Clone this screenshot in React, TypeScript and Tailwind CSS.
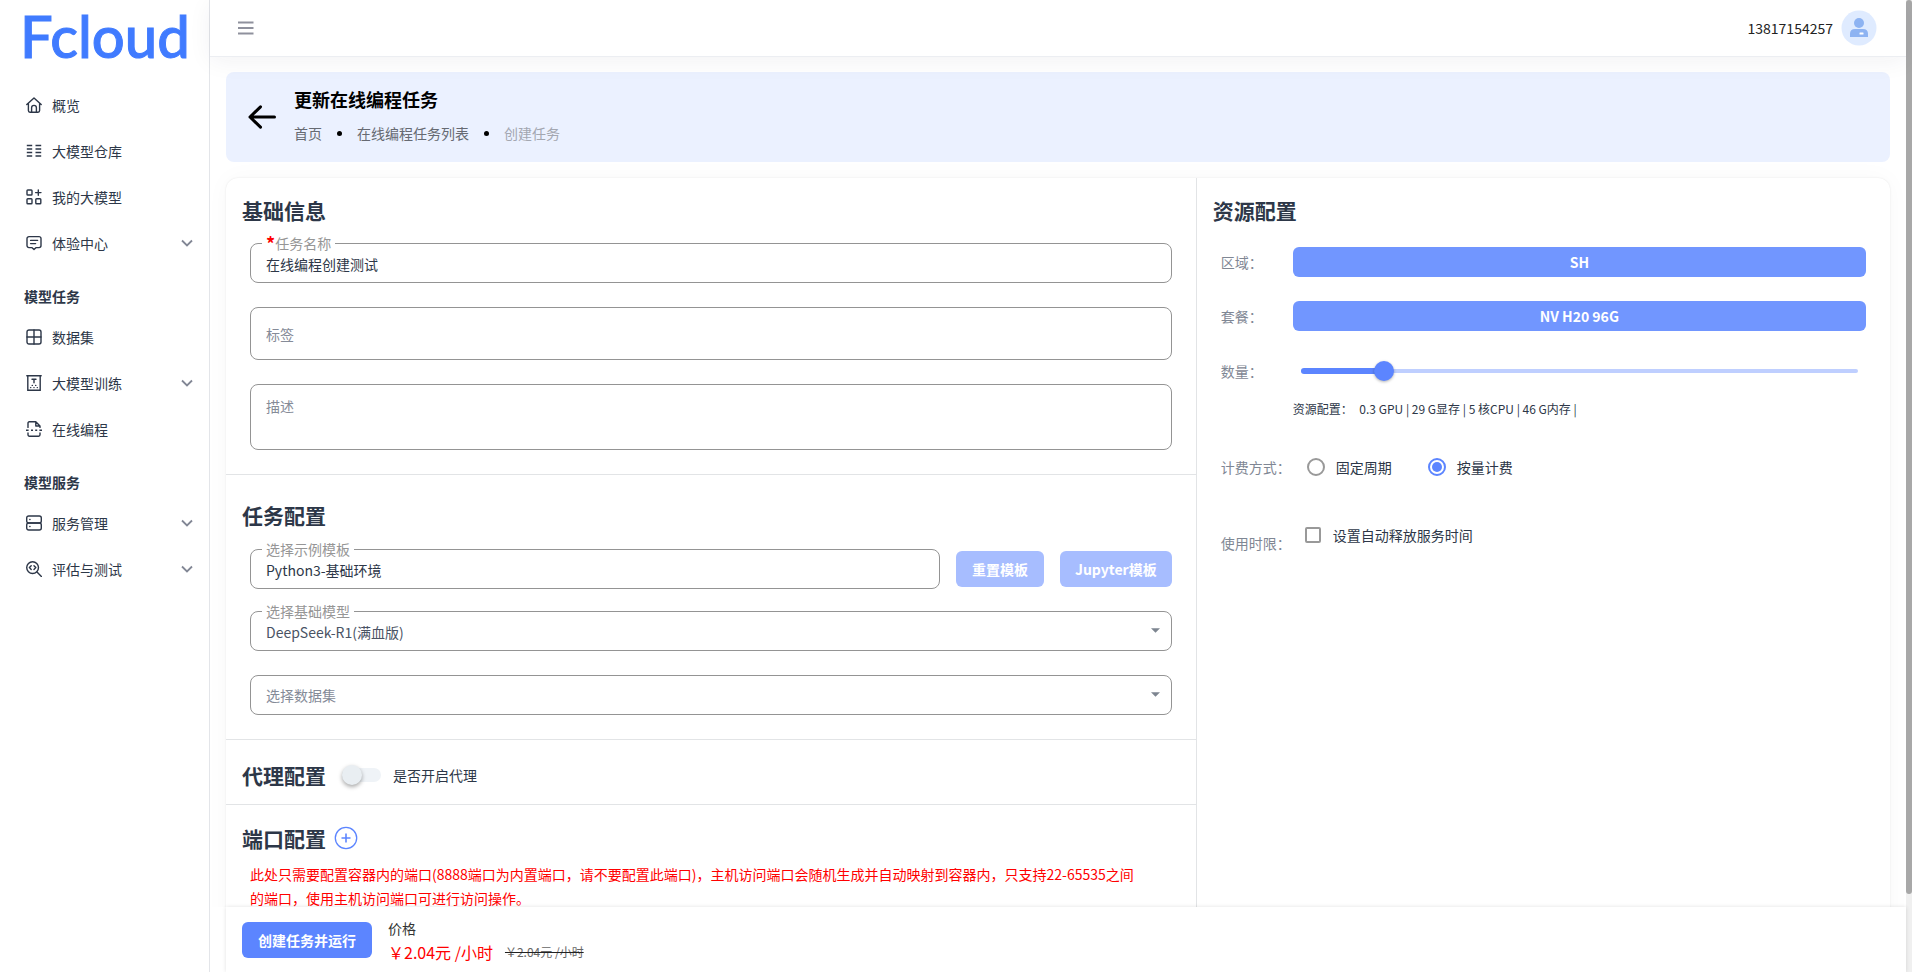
import React, { useState } from 'react';

interface IconProps {
  className?: string;
}

const Icon: React.FC<IconProps & { children: React.ReactNode }> = ({ className = 'w-4 h-4', children }) => (
  <svg viewBox="0 0 16 16" fill="none" stroke="currentColor" strokeWidth="1.4" strokeLinecap="round" strokeLinejoin="round" className={className} aria-hidden="true">
    {children}
  </svg>
);

const HomeIcon = () => (
  <Icon>
    <path d="M.8 7.6 8 .9l7.2 6.7M2.4 6.4v7.2a1.6 1.6 0 0 0 1.6 1.6h8a1.6 1.6 0 0 0 1.6-1.6V6.400" />
    <path d="M5.600 15v-4.200a2.400 2.400 0 0 1 4.800 0V15" />
  </Icon>
);

const ListIcon = () => (
  <Icon>
    <path d="M.8 2.5h5.400M.8 6h5.400M.8 9.500h5.400M.8 13h5.400M9.500 2.500h5.700M9.500 6h5.700M9.500 9.500h5.700M9.500 13h5.700" strokeLinecap="butt" />
  </Icon>
);

const AppsIcon = () => (
  <Icon>
    <rect x="1" y="1" width="5" height="5" rx=".8" />
    <rect x="1" y="9.800" width="5" height="5" rx=".8" />
    <rect x="9.800" y="9.800" width="5" height="5" rx=".8" />
    <path d="M12.300 1v5.200M9.600 3.600H15" />
  </Icon>
);

const ChatIcon = () => (
  <Icon>
    <path d="M3 1.600h10a2 2 0 0 1 2 2v7a2 2 0 0 1-2 2h-2.800L8 14.600l-2.200-2H3a2 2 0 0 1-2-2v-7a2 2 0 0 1 2-2Z" />
    <path d="M4.600 5.400h7M4.600 8.600h5" />
  </Icon>
);

const GridIcon = () => (
  <Icon>
    <rect x="1" y="1" width="14" height="14" rx="2" />
    <path d="M8 1v14M1 8h14" />
  </Icon>
);

const TrainIcon = () => (
  <Icon>
    <path d="M.8 .8h14.400M1.800 .8v14.400h12.400V.8M6 4.200h4M8 4.200v3.600" strokeLinejoin="miter" />
    <path d="M4.600 12.600h.2M7.900 12.600h.2M11.200 12.600h.2M6.200 10.400h.2M9.600 10.400h.2" />
  </Icon>
);

const CodeFileIcon = () => (
  <Icon>
    <path d="M2 6.400V2a1.200 1.200 0 0 1 1.200-1.200h6.600L14 5v1.400M9.800.8V5H14M2 12v1.800a1.400 1.400 0 0 0 1.400 1.400h9.200a1.400 1.400 0 0 0 1.400-1.400V12" />
    <path d="M0 9.200h2.600M5 9.200h2M9.200 9.200h2M13.400 9.200H16" strokeLinecap="butt" />
  </Icon>
);

const ServerIcon = () => (
  <Icon>
    <rect x=".7" y="1" width="14.600" height="7" rx="2" />
    <rect x=".7" y="8" width="14.600" height="7" rx="2" />
    <path d="M3.800 4.500h.2M3.800 11.500h.2" />
  </Icon>
);

const EvaluateIcon = () => (
  <Icon>
    <circle cx="6.600" cy="6.600" r="5.900" />
    <path d="m11 11 4.400 4.400M5.200 4.800 3.400 6.600l1.800 1.800M8 4.800l1.800 1.800L8 8.400" />
  </Icon>
);

const ChevronDown = () => (
  <svg viewBox="0 0 12 8" fill="none" stroke="currentColor" strokeWidth="1.800" className="w-3 h-2 text-[#828795]" aria-hidden="true">
    <path d="m1 1.500 5 5 5-5" />
  </svg>
);

const UserIcon = () => (
  <svg viewBox="0 0 36 36" className="w-9 h-9" aria-hidden="true">
    <circle cx="18" cy="18" r="17.500" fill="#dfebff" />
    <circle cx="18" cy="13" r="5" fill="#8db3f2" />
    <path d="M9 24q0-5 5-5h8q5 0 5 5v3H9z" fill="#8db3f2" />
    <rect x="18.500" y="22.500" width="4" height="2" rx=".5" fill="#fff" />
  </svg>
);

interface MenuItem {
  label: string;
  icon: React.ReactNode;
  expandable?: boolean;
}

const menuGroups: { title?: string; items: MenuItem[] }[] = [
  {
    items: [
      { label: '概览', icon: <HomeIcon /> },
      { label: '大模型仓库', icon: <ListIcon /> },
      { label: '我的大模型', icon: <AppsIcon /> },
      { label: '体验中心', icon: <ChatIcon />, expandable: true },
    ],
  },
  {
    title: '模型任务',
    items: [
      { label: '数据集', icon: <GridIcon /> },
      { label: '大模型训练', icon: <TrainIcon />, expandable: true },
      { label: '在线编程', icon: <CodeFileIcon /> },
    ],
  },
  {
    title: '模型服务',
    items: [
      { label: '服务管理', icon: <ServerIcon />, expandable: true },
      { label: '评估与测试', icon: <EvaluateIcon />, expandable: true },
    ],
  },
];

const Sidebar = () => (
  <aside className="w-[210px] shrink-0 border-r border-[#e3e5e9] bg-white">
    <a href="#" className="flex h-[82px] items-start pl-5 pt-1.5 font-['Lato',sans-serif] text-[58px] leading-[60px] font-medium text-[#407bff] [-webkit-text-stroke:1px_#407bff]">
      Fcloud
    </a>
    <nav>
      {menuGroups.map((group, i) => (
        <div key={i}>
          {group.title && <h3 className="h-12 px-6 pt-5 text-sm font-bold">{group.title}</h3>}
          <ul>
            {group.items.map((item) => (
              <li key={item.label}>
                <a href="#" className="flex h-[46px] items-center gap-2.5 pl-[26px] pr-4 text-sm">
                  {item.icon}
                  <span className="flex-1">{item.label}</span>
                  {item.expandable && <ChevronDown />}
                </a>
              </li>
            ))}
          </ul>
        </div>
      ))}
    </nav>
  </aside>
);

const Header = () => (
  <header className="relative z-10 flex h-[57px] shrink-0 items-center justify-between border-b border-[#eceef2] bg-white pl-7 pr-[29px] shadow-[0_4px_24px_rgba(30,40,70,0.06)]">
    <button aria-label="菜单" className="text-[#8f919d]">
      <svg viewBox="0 0 16 14" stroke="currentColor" strokeWidth="2" className="w-4 h-3.5">
        <path d="M0 1.500h15.500M0 7h15.500M0 12.500h15.500" />
      </svg>
    </button>
    <div className="flex items-center gap-2 text-sm text-[#222]">
      <span>13817154257</span>
      <UserIcon />
    </div>
  </header>
);

const Banner = () => (
  <div className="flex h-[90px] items-center gap-[18px] rounded-lg bg-[#ebf1ff] pl-[22px] text-black">
    <button aria-label="返回">
      <svg viewBox="0 0 28 24" fill="none" stroke="currentColor" strokeWidth="3" strokeLinecap="round" strokeLinejoin="round" className="w-7 h-6">
        <path d="M2 12h24.500M12.500 1.800 2 12l10.500 10.200" />
      </svg>
    </button>
    <div>
      <h1 className="text-lg font-bold leading-8">更新在线编程任务</h1>
      <nav className="flex items-center gap-[15px] text-sm leading-9 text-[#666a72]">
        <a href="#">首页</a>
        <span className="h-[5px] w-[5px] rounded-full bg-black" />
        <a href="#">在线编程任务列表</a>
        <span className="h-[5px] w-[5px] rounded-full bg-black" />
        <span className="text-[#a3a7b1]">创建任务</span>
      </nav>
    </div>
  </div>
);

const SectionTitle: React.FC<{ children: React.ReactNode }> = ({ children }) => (
  <h2 className="text-[21px] font-bold leading-8">{children}</h2>
);

interface FieldProps {
  id: string;
  label: string;
  required?: boolean;
  className?: string;
  children: React.ReactNode;
}

// outlined field whose label sits on the top border
const Field: React.FC<FieldProps> = ({ id, label, required, className = '', children }) => (
  <div className={`relative ${className}`}>
    <label htmlFor={id} className="absolute -top-2.5 left-3 flex h-5 bg-white px-1 text-sm leading-5 text-[#969696]">
      {required && <span className="text-lg leading-5 font-bold text-[#ff0000]">*</span>}
      {label}
    </label>
    {children}
  </div>
);

const SelectArrow = () => (
  <svg viewBox="0 0 10 5" fill="#7d8590" className="pointer-events-none absolute right-3 top-[17px] h-[5px] w-[9px]">
    <path d="M0 0h10L5 5z" />
  </svg>
);

const BasicInfo = () => (
  <section className="border-b border-[#e2e4e6] px-4 pb-6 pt-4">
    <SectionTitle>基础信息</SectionTitle>
    <div className="mt-[17px] flex flex-col gap-6 px-2">
      <Field id="name" label="任务名称" required>
        <input id="name" defaultValue="在线编程创建测试" className="block h-10 w-full rounded-lg border border-[#949494] px-[15px] pt-0.5 text-sm" />
      </Field>
      <input aria-label="标签" placeholder="标签" className="h-[53px] w-full rounded-lg border border-[#949494] px-[15px] text-sm placeholder:text-[#858b98]" />
      <textarea aria-label="描述" placeholder="描述" className="block h-[66px] w-full resize-none rounded-lg border border-[#949494] px-[15px] pt-[11px] text-sm placeholder:text-[#858b98]" />
    </div>
  </section>
);

const TaskConfig = () => (
  <section className="border-b border-[#e2e4e6] px-4 pb-6 pt-6">
    <SectionTitle>任务配置</SectionTitle>
    <div className="mt-[18px] flex flex-col px-2">
      <div className="flex items-center gap-4">
        <Field id="template" label="选择示例模板" className="flex-1">
          <input id="template" defaultValue="Python3-基础环境" className="block h-10 w-full rounded-lg border border-[#949494] px-[15px] pt-0.5 text-sm" />
        </Field>
        <button className="h-9 rounded-md bg-[#a7bdff] px-4 text-sm font-bold text-white">重置模板</button>
        <button className="h-9 rounded-md bg-[#a7bdff] px-[15px] text-sm font-bold text-white">Jupyter模板</button>
      </div>
      <Field id="model" label="选择基础模型" className="mt-[22px]">
        <select id="model" className="block h-10 w-full appearance-none rounded-lg border border-[#949494] px-[15px] pt-0.5 text-sm text-[#4a5364]">
          <option>DeepSeek-R1(满血版)</option>
        </select>
        <SelectArrow />
      </Field>
      <div className="relative mt-6">
        <select aria-label="选择数据集" className="block h-10 w-full appearance-none rounded-lg border border-[#949494] px-[15px] text-sm text-[#858b98]">
          <option>选择数据集</option>
        </select>
        <SelectArrow />
      </div>
    </div>
  </section>
);

const ProxyConfig = () => (
  <section className="flex h-[65px] items-center border-b border-[#e2e4e6] px-4 pt-1.5">
    <SectionTitle>代理配置</SectionTitle>
    <label className="flex items-center gap-3 pl-4 text-sm">
      <input
        type="checkbox"
        role="switch"
        className="flex h-3.5 w-[39px] appearance-none items-center rounded-full bg-[#eff3f7] before:h-5 before:w-5 before:rounded-full before:bg-[#e9eef2] before:shadow-[0_2px_4px_rgba(0,0,0,0.35)] checked:justify-end checked:before:bg-[#5c85ff]"
      />
      是否开启代理
    </label>
  </section>
);

const PortConfig = () => (
  <section className="px-4 pb-16 pt-[17px]">
    <div className="flex items-center gap-2">
      <SectionTitle>端口配置</SectionTitle>
      <button aria-label="添加端口" className="text-[#5c85ff]">
        <svg viewBox="0 0 24 24" fill="none" stroke="currentColor" className="w-6 h-6">
          <circle cx="12" cy="12" r="10.700" strokeWidth="1.300" />
          <path d="M12 7.500v9M7.500 12h9" strokeWidth="1.600" />
        </svg>
      </button>
    </div>
    <p className="mt-2 px-2 text-sm leading-6 text-[#ff0000]">
      此处只需要配置容器内的端口(8888端口为内置端口，请不要配置此端口)，主机访问端口会随机生成并自动映射到容器内，只支持22-65535之间
      <br />
      的端口，使用主机访问端口可进行访问操作。
    </p>
  </section>
);

const ResourceConfig = () => {
  const [amount, setAmount] = useState(15);
  const [billing, setBilling] = useState('usage');

  return (
    <section className="flex-1 px-4 pt-4">
      <SectionTitle>资源配置</SectionTitle>
      <div className="mt-[21px] px-2 text-sm">
        <div className="flex items-center">
          <span className="w-[72px] shrink-0 text-[#7f8794]">区域：</span>
          <button className="h-[30px] flex-1 rounded-md bg-[#7196ff] font-bold text-white">SH</button>
        </div>
        <div className="mt-6 flex items-center">
          <span className="w-[72px] shrink-0 text-[#7f8794]">套餐：</span>
          <button className="h-[30px] flex-1 rounded-md bg-[#7196ff] font-bold text-white">NV H20 96G</button>
        </div>
        <div className="mt-6 flex h-8 items-center">
          <label htmlFor="amount" className="w-[72px] shrink-0 text-[#7f8794]">数量：</label>
          <div className="relative flex h-5 flex-1 items-center px-2">
            <div className="flex h-1 w-full items-center rounded-full bg-[#bfcfff]">
              <div className="h-1.5 rounded-full bg-[#5c85ff]" style={{ width: `${amount}%` }} />
            </div>
            <input
              id="amount"
              type="range"
              value={amount}
              onChange={(e) => setAmount(Number(e.target.value))}
              className="absolute -inset-x-0.5 h-5 appearance-none bg-transparent [&::-webkit-slider-thumb]:h-5 [&::-webkit-slider-thumb]:w-5 [&::-webkit-slider-thumb]:appearance-none [&::-webkit-slider-thumb]:rounded-full [&::-webkit-slider-thumb]:bg-[#5c85ff] [&::-webkit-slider-thumb]:shadow-[0_1px_3px_rgba(0,0,0,0.3)]"
            />
          </div>
        </div>
        <p className="mt-3 pl-[72px] text-xs leading-5">
          <span className="mr-1">资源配置：</span> 0.3 GPU | 29 G显存 | 5 核CPU | 46 G内存 |
        </p>
        <div className="mt-9 flex h-6 items-center">
          <span className="mr-4 text-[#7f8794]">计费方式：</span>
          <label className="mr-9 flex items-center gap-[11px]">
            <input
              type="radio"
              name="billing"
              checked={billing === 'period'}
              onChange={() => setBilling('period')}
              className="flex h-[18px] w-[18px] appearance-none items-center justify-center rounded-full border-2 border-[#999] checked:border-[#5c85ff] checked:before:h-2.5 checked:before:w-2.5 checked:before:rounded-full checked:before:bg-[#5c85ff]"
            />
            固定周期
          </label>
          <label className="flex items-center gap-[11px]">
            <input
              type="radio"
              name="billing"
              checked={billing === 'usage'}
              onChange={() => setBilling('usage')}
              className="flex h-[18px] w-[18px] appearance-none items-center justify-center rounded-full border-2 border-[#999] checked:border-[#5c85ff] checked:before:h-2.5 checked:before:w-2.5 checked:before:rounded-full checked:before:bg-[#5c85ff]"
            />
            按量计费
          </label>
        </div>
        <div className="mt-11 flex items-start leading-6">
          <span className="mr-3.5 pt-2 text-[#7f8794]">使用时限：</span>
          <label className="flex items-center gap-3">
            <input type="checkbox" className="h-4 w-4 appearance-none rounded-xs border-2 border-[#999] checked:bg-[#5c85ff]" />
            设置自动释放服务时间
          </label>
        </div>
      </div>
    </section>
  );
};

const Footer = () => (
  <footer className="relative ml-4 flex h-[65px] shrink-0 items-center gap-4 bg-white px-4 shadow-[0_0_4px_rgba(0,0,0,0.12)]">
    <button className="h-9 rounded-md bg-[#5c85ff] px-4 text-sm font-bold text-white">创建任务并运行</button>
    <div className="text-[#333]">
      <div className="text-sm leading-6">价格</div>
      <div className="flex items-center gap-3 leading-6">
        <span className="text-base leading-6 text-[#ff0000]">￥2.04元 /小时</span>
        <span className="text-xs leading-6 text-[#666] line-through decoration-[#222]">￥2.04元 /小时</span>
      </div>
    </div>
  </footer>
);

const App: React.FC = () => {
  return (
    <div className="flex h-screen overflow-hidden bg-white font-['Noto_Sans_CJK_SC',sans-serif] text-[#2d3748]">
      <Sidebar />
      <div className="flex min-w-0 flex-1 flex-col">
        <Header />
        <main className="min-h-0 flex-1 overflow-hidden px-4 pt-[15px]">
          <Banner />
          <div className="mt-4 flex rounded-xl bg-white shadow-[0_0_2px_rgba(0,0,0,0.1),0_0_24px_rgba(0,0,0,0.03)]">
            <div className="w-7/12 border-r border-[#e2e4e6]">
              <BasicInfo />
              <TaskConfig />
              <ProxyConfig />
              <PortConfig />
            </div>
            <ResourceConfig />
          </div>
        </main>
        <Footer />
      </div>
      <div className="w-1.5 shrink-0 bg-[#f0f0f0]">
        <div className="h-[92%] rounded-full bg-[#a8a8a8]" />
      </div>
    </div>
  );
};

export default App;
